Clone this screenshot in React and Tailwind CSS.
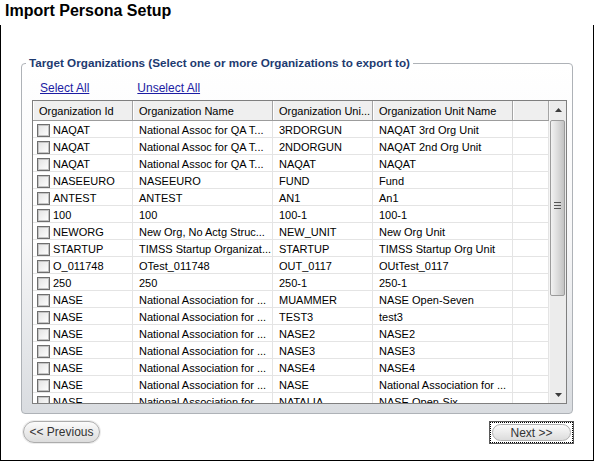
const rows = [
  ["NAQAT", "National Assoc for QA T...", "3RDORGUN", "NAQAT 3rd Org Unit"],
  ["NAQAT", "National Assoc for QA T...", "2NDORGUN", "NAQAT 2nd Org Unit"],
  ["NAQAT", "National Assoc for QA T...", "NAQAT", "NAQAT"],
  ["NASEEURO", "NASEEURO", "FUND", "Fund"],
  ["ANTEST", "ANTEST", "AN1", "An1"],
  ["100", "100", "100-1", "100-1"],
  ["NEWORG", "New Org, No Actg Struc...", "NEW_UNIT", "New Org Unit"],
  ["STARTUP", "TIMSS Startup Organizat...", "STARTUP", "TIMSS Startup Org Unit"],
  ["O_011748", "OTest_011748", "OUT_0117", "OUtTest_0117"],
  ["250", "250", "250-1", "250-1"],
  ["NASE", "National Association for ...", "MUAMMER", "NASE Open-Seven"],
  ["NASE", "National Association for ...", "TEST3", "test3"],
  ["NASE", "National Association for ...", "NASE2", "NASE2"],
  ["NASE", "National Association for ...", "NASE3", "NASE3"],
  ["NASE", "National Association for ...", "NASE4", "NASE4"],
  ["NASE", "National Association for ...", "NASE", "National Association for ..."],
  ["NASE", "National Association for ...", "NATALIA", "NASE Open-Six"],
];

const HeaderCell = ({ w, children }) => (
  <div
    className={`${w} h-full shrink-0 border-r border-[#a5a5a5] shadow-[inset_1px_0_0_#ffffff] pl-[6px] pt-[1px] leading-[18px] whitespace-nowrap overflow-hidden`}
  >
    {children}
  </div>
);

const Cell = ({ w, children }) => (
  <div className={`${w} h-full shrink-0 border-r border-[#e4e4e4] pl-[6px] pt-[2px] leading-[14px] whitespace-nowrap overflow-hidden`}>
    {children}
  </div>
);

const Arrow = ({ down }) => (
  <div className="h-[17px] flex items-center justify-center">
    <svg width="7" height="4" viewBox="0 0 7 4">
      {down ? <polygon points="0,0 7,0 3.5,4" fill="#3c3c3c" /> : <polygon points="0,4 7,4 3.5,0" fill="#3c3c3c" />}
    </svg>
  </div>
);

export default function App() {
  return (
    <div className="w-[594px] h-[461px] bg-white text-black font-['Liberation_Sans',Arial,sans-serif]">
      <div className="h-[25px] pl-[5px] pt-[2px] text-[16px] leading-[18px] font-bold">Import Persona Setup</div>

      <div className="h-[436px] border-x border-b border-black pl-[20px] pr-[19px] pt-[38px]">
        {/* group box */}
        <div className="relative w-[552px] h-[351px] border border-[#aeb2b7] rounded-[4px] bg-gradient-to-b from-white via-[#f7f7f8] to-[#d9dce0]">
          <span className="absolute left-[4px] top-[-8px] px-[3px] bg-white text-[11.7px] leading-[13px] font-bold text-[#1d3a70] whitespace-nowrap">
            Target Organizations (Select one or more Organizations to export to)
          </span>

          <div className="h-[36px] pl-[18px] pt-[17px] flex gap-[48px] text-[12px] leading-[14px] text-[#1c1ca3]">
            <span className="underline">Select All</span>
            <span className="underline">Unselect All</span>
          </div>

          {/* grid */}
          <div className="ml-[10px] w-[535px] h-[304px] border border-[#7f7f7f] bg-white flex text-[11px]">
            <div className="w-[516px] flex flex-col">
              <div className="h-[20px] flex border-b border-[#9c9c9c] bg-[#efefef]">
                <HeaderCell w="w-[100px]">Organization Id</HeaderCell>
                <HeaderCell w="w-[140px]">Organization Name</HeaderCell>
                <HeaderCell w="w-[100px]">Organization Uni...</HeaderCell>
                <HeaderCell w="w-[140px]">Organization Unit Name</HeaderCell>
                <HeaderCell w="w-[36px]"></HeaderCell>
              </div>
              <div className="flex-1 overflow-hidden">
                {rows.map((r, i) => (
                  <div key={i} className="h-[17px] flex border-b border-[#e4e4e4]">
                    <div className="w-[100px] h-full shrink-0 border-r border-[#e4e4e4] flex items-start pl-[4px] pt-[3px] whitespace-nowrap">
                      <span className="w-[13px] h-[13px] shrink-0 border border-[#6e6e6e] shadow-[inset_0_0_0_1px_#c4c4c4] bg-gradient-to-br from-[#e2e2e2] to-white" />
                      <span className="pl-[3px] leading-[13px]">{r[0]}</span>
                    </div>
                    <Cell w="w-[140px]">{r[1]}</Cell>
                    <Cell w="w-[100px]">{r[2]}</Cell>
                    <Cell w="w-[140px]">{r[3]}</Cell>
                    <Cell w="w-[36px]"></Cell>
                  </div>
                ))}
              </div>
            </div>

            {/* scrollbar */}
            <div className="w-[17px] h-full flex flex-col bg-[#ececec] border-l border-[#f6f6f6]">
              <Arrow />
              <div className="flex-1 pt-[2px]">
                <div className="w-[15px] h-[176px] rounded-[2px] border border-[#9b9b9b] bg-gradient-to-r from-[#f2f2f2] via-[#dcdcdc] to-[#c3c3c3] flex flex-col items-center justify-center gap-[2px] pb-[6px]">
                  <span className="w-[7px] h-[1px] bg-[#555]" />
                  <span className="w-[7px] h-[1px] bg-[#555]" />
                  <span className="w-[7px] h-[1px] bg-[#555]" />
                </div>
              </div>
              <Arrow down />
            </div>
          </div>
        </div>

        {/* buttons */}
        <div className="mt-[7px] flex justify-between items-start text-[12px] text-[#333]">
          <button className="ml-[2px] w-[77px] h-[22px] rounded-[11px] border border-[#acacac] bg-gradient-to-b from-[#fbfbfb] to-[#dcdcdc] leading-[20px] shadow-[0_0_0_1px_#ececec]">
            &lt;&lt; Previous
          </button>
          <div className="w-[85px] h-[23px] border border-[#5a5a5a]">
            <div className="w-full h-full border border-dotted border-black p-[1px]">
              <div className="w-full h-full rounded-[9px] border border-[#b0b0b0] bg-gradient-to-b from-[#fbfbfb] to-[#dcdcdc] flex items-center justify-center leading-[16px]">
                Next &gt;&gt;
              </div>
            </div>
          </div>
        </div>
      </div>
    </div>
  );
}
